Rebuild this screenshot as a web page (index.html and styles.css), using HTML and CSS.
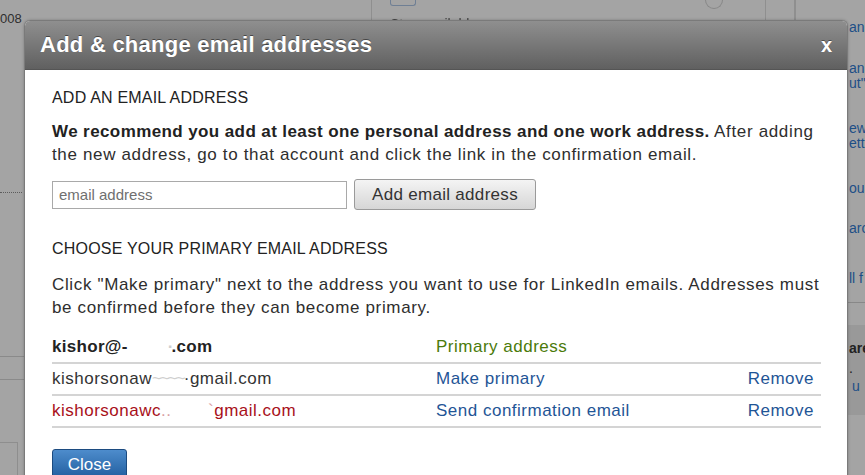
FILE: index.html
```html
<!DOCTYPE html>
<html>
<head>
<meta charset="utf-8">
<link rel="stylesheet" href="styles.css">
</head>
<body>
<div class="page">
  <div class="col-left">
    <div class="year">008</div>
    <div class="dotted"></div>
    <div class="hline first"></div>
    <div class="hline"></div>
    <div class="boxbit"></div>
  </div>
  <div class="col-mid">
    <div class="mid-top">
      <span class="mini-icon"></span>
      <span class="mini-circle"></span>
    </div>
    <div class="blur-text">Stay available</div>
  </div>
  <div class="col-narrow"></div>
  <div class="col-right">
    <div class="side-links">
      <span class="lnk l1">an</span>
      <span class="lnk l2">an'</span>
      <span class="lnk l3">ut"</span>
      <span class="lnk l4">ew</span>
      <span class="lnk l5">etti</span>
      <span class="lnk l6">ou</span>
      <span class="lnk l7">arc</span>
      <span class="lnk l8">ll f</span>
    </div>
    <div class="side-rule"></div>
    <div class="side-band">
      <span class="band-title">are</span>
      <span class="band-dot">.</span>
      <span class="band-link">u</span>
    </div>
  </div>
</div>

<div class="dialog">
  <div class="dialog-head">
    <h2 class="dialog-title">Add &amp; change email addresses</h2>
    <span class="dialog-x">x</span>
  </div>
  <div class="dialog-body">
    <h3 class="section-title">ADD AN EMAIL ADDRESS</h3>
    <p class="para"><b>We recommend you add at least one personal address and one work address.</b> After adding the new address, go to that account and click the link in the confirmation email.</p>
    <div class="add-row">
      <input class="email-input" type="text" placeholder="email address">
      <button class="add-btn">Add email address</button>
    </div>
    <h3 class="section-title second">CHOOSE YOUR PRIMARY EMAIL ADDRESS</h3>
    <p class="para para-second">Click "Make primary" next to the address you want to use for LinkedIn emails. Addresses must be confirmed before they can become primary.</p>
    <div class="addr-table">
      <div class="addr-row">
        <span class="addr primary-addr">kishor@-&nbsp;&nbsp;&nbsp;&nbsp;&nbsp;&nbsp;&nbsp;&nbsp;<span class="smudge">·</span>.com</span>
        <span class="status primary">Primary address</span>
        <span class="remove"></span>
      </div>
      <div class="addr-row">
        <span class="addr">kishorsonaw<span class="smudge">~~~~</span>·gmail.com</span>
        <a class="status link">Make primary</a>
        <a class="remove link">Remove</a>
      </div>
      <div class="addr-row">
        <span class="addr unconfirmed">kishorsonawc<span class="smudge-red">..</span>&nbsp;&nbsp;&nbsp;&nbsp;&nbsp;&nbsp;&nbsp;<span class="smudge-red">`</span>gmail.com</span>
        <a class="status link">Send confirmation email</a>
        <a class="remove link">Remove</a>
      </div>
    </div>
    <button class="close-btn">Close</button>
  </div>
</div>
</body>
</html>
```

FILE: styles.css
```css
html, body {
  margin: 0;
  padding: 0;
}
body {
  width: 865px;
  height: 475px;
  overflow: hidden;
  background: #a4a4a4;
  font-family: "Liberation Sans", Arial, Helvetica, sans-serif;
  position: relative;
}

/* dimmed page underneath */
.page {
  display: grid;
  grid-template-columns: 372px 393px 30px 1fr;
  height: 475px;
}
.col-left {
  display: flex;
  flex-direction: column;
  border-right: 1px solid #8f8f8f;
}
.year {
  font-size: 13px;
  color: #2e2e2e;
  margin-top: 12px;
  line-height: 14px;
}
.dotted {
  margin-top: 166px;
  width: 22px;
  border-top: 1px dotted #5c5c5c;
}
.hline {
  margin-top: 163px;
  width: 24px;
  border-top: 1px solid #8a8a8a;
}
.hline + .hline { margin-top: 22px; }
.boxbit {
  margin-top: 62px;
  width: 17px;
  height: 40px;
  border: 1px solid #8e8e8e;
  border-left: none;
}
.col-mid {
  display: flex;
  flex-direction: column;
  padding-left: 18px;
}
.mid-top {
  display: flex;
  justify-content: space-between;
  align-items: flex-start;
  height: 12px;
  padding-right: 42px;
}
.mini-icon {
  width: 24px;
  height: 5px;
  border: 1px solid #6f7f94;
  border-top: none;
  border-radius: 0 0 3px 3px;
}
.mini-circle {
  width: 16px;
  height: 8px;
  border: 1px solid #888;
  border-top: none;
  border-radius: 0 0 9px 9px;
}
.blur-text {
  font-size: 14px;
  color: #444;
  margin-top: 4px;
  filter: blur(0.6px);
}
.col-narrow {
  border-left: 1px solid #8f8f8f;
  border-right: 1px solid #8f8f8f;
}
.col-right {
  display: flex;
  flex-direction: column;
  padding-left: 53px;
  border-left: 1px solid #8f8f8f;
  overflow: hidden;
}
.side-links {
  display: flex;
  flex-direction: column;
  font-size: 14px;
  color: #1d4f87;
  line-height: 15px;
  padding-top: 20px;
}
.lnk { display: block; white-space: nowrap; }
.l2 { margin-top: 26px; }
.l4 { margin-top: 30px; }
.l6 { margin-top: 30px; }
.l7 { margin-top: 25px; }
.l8 { margin-top: 35px; }
.side-rule {
  margin-top: 16px;
  margin-left: -4px;
  border-top: 1px solid #888;
}
.side-band {
  margin-top: 22px;
  margin-left: -4px;
  padding-left: 4px;
  padding-top: 15px;
  background: #999;
  height: 75px;
  display: flex;
  flex-direction: column;
  font-size: 14px;
  line-height: 16px;
}
.band-title { color: #222; font-weight: bold; }
.band-dot { color: #222; margin-top: 4px; }
.band-link { color: #1d4f87; margin-top: 2px; padding-left: 3px; }

/* modal dialog (overlay) */
.dialog {
  position: absolute;
  left: 24px;
  top: 20px;
  width: 822px;
  height: 470px;
  background: #fff;
  border: 1px solid #7a7a7a;
  border-bottom: none;
  border-radius: 6px 6px 0 0;
  box-shadow: 0 0 3px rgba(0,0,0,0.25);
  overflow: hidden;
}
.dialog-head {
  height: 49px;
  background: linear-gradient(#8f8f8f, #606060);
  display: flex;
  align-items: center;
  justify-content: space-between;
  padding: 0 15px 0 15px;
  border-bottom: 1px solid #555;
  box-sizing: border-box;
}
.dialog-title {
  margin: 0;
  color: #fff;
  font-size: 22px;
  font-weight: bold;
  letter-spacing: 0.25px;
  text-shadow: 0 -1px 0 rgba(0,0,0,0.45);
}
.dialog-x {
  color: #fff;
  font-size: 20px;
  font-weight: bold;
  text-shadow: 0 -1px 0 rgba(0,0,0,0.4);
}
.dialog-body {
  padding: 17px 24px 0 27px;
  color: #2a2a2a;
  font-size: 16px;
}
.section-title {
  margin: 0;
  font-size: 16px;
  font-weight: normal;
  line-height: 22px;
  letter-spacing: 0.2px;
  color: #222;
}
.section-title.second { margin-top: 28px; }
.para {
  margin: 11px 0 0 0;
  line-height: 23px;
  font-size: 17px;
  letter-spacing: 0.65px;
  color: #2e2e2e;
}
.para b { color: #222; letter-spacing: 0.4px; }
.para-second { margin-top: 13px; }
.add-row {
  display: flex;
  align-items: center;
  gap: 7px;
  margin-top: 13px;
}
.email-input {
  width: 295px;
  height: 28px;
  box-sizing: border-box;
  border: 1px solid #a9a9a9;
  padding: 0 6px;
  font-family: "Liberation Sans", Arial, sans-serif;
  font-size: 15px;
  color: #333;
  outline: none;
}
.email-input::placeholder { color: #6f6f6f; }
.add-btn {
  height: 31px;
  width: 182px;
  border: 1px solid #9a9a9a;
  border-radius: 3px;
  background: linear-gradient(#f4f4f4, #d6d6d6);
  font-family: "Liberation Sans", Arial, sans-serif;
  font-size: 17px;
  letter-spacing: 0.3px;
  color: #333;
  padding: 0;
}
.addr-table {
  margin-top: 13px;
  width: 769px;
}
.addr-row {
  display: grid;
  grid-template-columns: 384px 1fr auto;
  align-items: center;
  height: 30px;
  border-bottom: 2px solid #d4d4d4;
  font-size: 17px;
  letter-spacing: 0.5px;
  padding-right: 7px;
}
.addr { color: #333; white-space: nowrap; }
.primary-addr { font-weight: bold; color: #222; letter-spacing: 0.3px; }
.unconfirmed { color: #a8101a; }
.smudge { color: #cfcfcf; letter-spacing: -2px; }
.smudge-red { color: #d9a0a4; }
.status.primary { color: #4b7a0a; }
.link { color: #1f5596; cursor: pointer; }
.remove { text-align: right; }
.close-btn {
  margin-top: 21px;
  width: 75px;
  height: 32px;
  border: 1px solid #1c4b80;
  border-radius: 3px;
  background: linear-gradient(#4d8ccc, #1f5b9c);
  color: #fff;
  font-family: "Liberation Sans", Arial, sans-serif;
  font-size: 17px;
  padding: 0;
}
```
